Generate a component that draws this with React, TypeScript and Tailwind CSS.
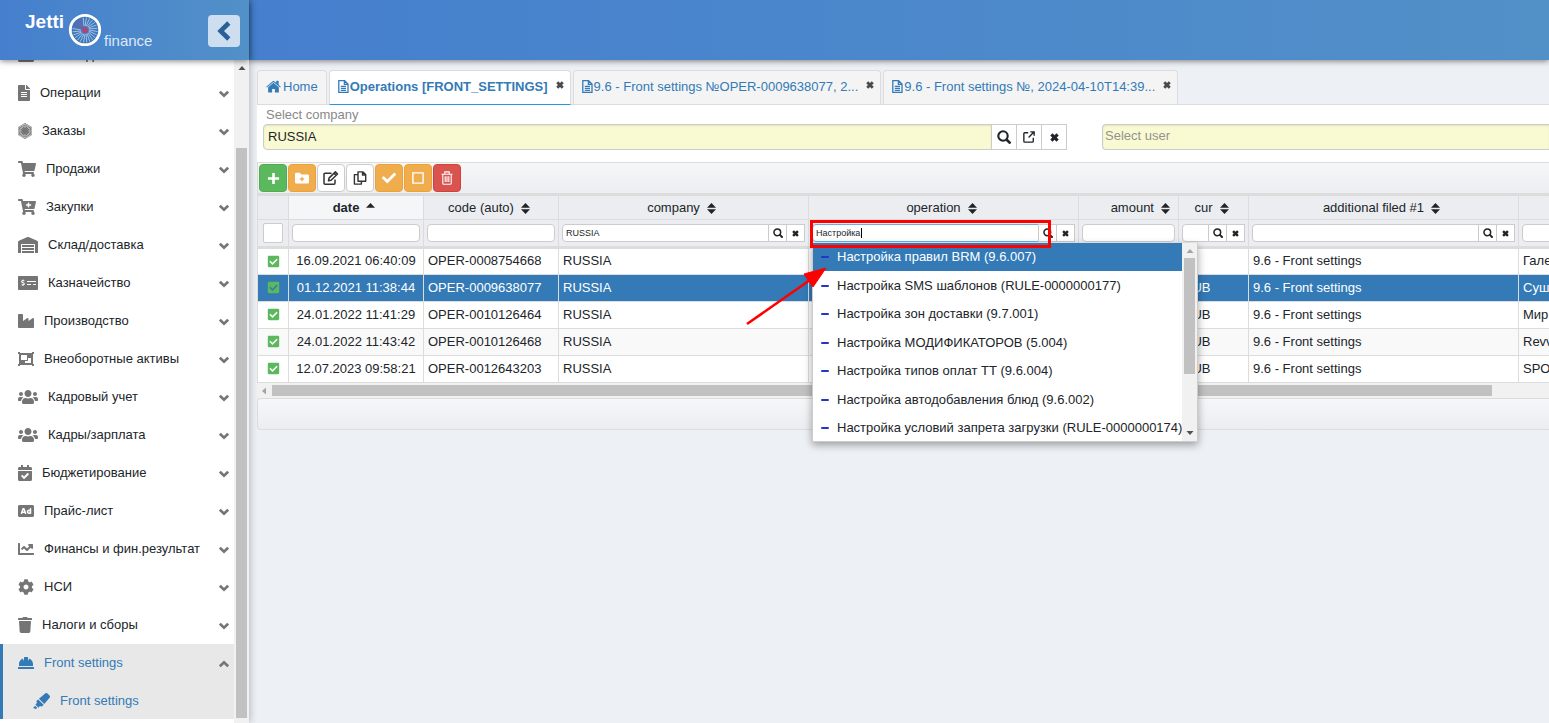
import React from "react";
import {
  FaTable, FaFileAlt, FaFirstOrder, FaShoppingCart, FaCartPlus, FaWarehouse, FaMoneyCheckAlt, FaIndustry,
  FaObjectGroup, FaUsers, FaCalendarCheck, FaAd, FaChartLine, FaCog, FaTrash, FaHardHat, FaHighlighter,
  FaCheck, FaCheckSquare,
} from "react-icons/fa";

type Glyph = React.ComponentType<{ className?: string }>;

/* ---------- small drawn icons ---------- */

const HomeIcon = () => (
  <svg viewBox="0 0 14 12" className="h-[13px] w-[15px]" fill="currentColor">
    <path d="M7 2.6 12 6.8v4.4a.5.5 0 0 1-.5.5H8.3V8.3H5.7v3.4H2.5a.5.5 0 0 1-.5-.5V6.8z" />
    <path d="M.2 6.2 6.3 1a1.1 1.1 0 0 1 1.4 0l1.8 1.5V1a.3.3 0 0 1 .3-.3h1.7a.3.3 0 0 1 .3.3v3.3l2 1.9-.6.7L7 1.7.8 6.9z" />
  </svg>
);

const DocIcon = () => (
  <svg viewBox="0 0 11 13" className="h-[13px] w-[11px] shrink-0" fill="none" stroke="currentColor" strokeWidth="1.3">
    <path d="M.8.7h5.8l3.4 3.4v8.2H.8z M6.4.7v3.6H10" />
    <path d="M2.8 6.3H8M2.8 8.3H8M2.8 10.3H8" />
  </svg>
);

const Cross = ({ className = "h-2 w-2" }: { className?: string }) => (
  <svg viewBox="0 0 10 10" className={className} fill="currentColor">
    <path d="M2.8.3.3 2.8 2.5 5 .3 7.2l2.5 2.5L5 7.5l2.2 2.2 2.5-2.5L7.5 5l2.2-2.2L7.2.3 5 2.5z" />
  </svg>
);

const Lens = ({ className = "h-2.5 w-2.5" }: { className?: string }) => (
  <svg viewBox="0 0 14 14" className={className} fill="none" stroke="currentColor" strokeWidth="2.1" strokeLinecap="round">
    <circle cx="6" cy="6" r="4.7" />
    <path d="m9.7 9.7 2.9 2.9" strokeWidth="2.7" />
  </svg>
);

const Chevron = ({ up }: { up?: boolean }) => (
  <svg viewBox="0 0 10 8" className="mt-0.5 mr-px h-2 w-2.5 shrink-0 text-[#757575]" fill="none" stroke="currentColor" strokeWidth="2.6">
    <path d={up ? "M.9 6.3 5 2.3l4.1 4" : "M.9 1.7 5 5.7l4.1-4"} />
  </svg>
);

const Collapse = () => (
  <svg viewBox="0 0 14 20" className="h-5 w-3.5" fill="none" stroke="currentColor" strokeWidth="4.6">
    <path d="M11.8 2 3.6 10l8.2 8" />
  </svg>
);

const OpenIcon = () => (
  <svg viewBox="0 0 14 14" className="h-3 w-3" fill="none" stroke="currentColor" strokeWidth="1.6">
    <path d="M6 2H2a1 1 0 0 0-1 1v9a1 1 0 0 0 1 1h9a1 1 0 0 0 1-1V8M8.5 1H13v4.5M13 1 6.5 7.5" />
  </svg>
);

const PlusIcon = () => (
  <svg viewBox="0 0 14 14" className="h-[13px] w-[13px]" stroke="currentColor" strokeWidth="2.8">
    <path d="M7 1v12M1 7h12" />
  </svg>
);

const FolderPlus = () => (
  <svg viewBox="0 0 14 12" className="h-3 w-3.5">
    <path d="M0 2Q0 .8 1.2.8h3.6L6.3 2.6h6.5Q14 2.6 14 3.8v6.4q0 1.2-1.2 1.2H1.2Q0 11.4 0 10.2z" fill="currentColor" />
    <path d="M7 4.8v4.4M4.8 7h4.4" stroke="#f0ad4e" strokeWidth="1.3" />
  </svg>
);

const EditIcon = () => (
  <svg viewBox="0 0 16 14" className="h-3.5 w-4" fill="none" stroke="currentColor" strokeWidth="1.5" strokeLinejoin="round">
    <path d="M8.5 2.2H2a1 1 0 0 0-1 1v9a1 1 0 0 0 1 1h9a1 1 0 0 0 1-1V8.5" />
    <path d="m5.5 9.8.5-2.7L12.4.9l2.1 2.1-6.4 6.3zM11 2.3l2 2" />
  </svg>
);

const CopyIcon = () => (
  <svg viewBox="0 0 14 14" className="h-3.5 w-3.5" fill="none" stroke="currentColor" strokeWidth="1.4" strokeLinejoin="round">
    <path d="M5 .9h5L12.7 3.6v6.6H5zM9.5.9V4h3.2M5 3.6H1.4v9.5h7v-2.9" />
  </svg>
);

const SquareIcon = () => (
  <svg viewBox="0 0 12 12" className="h-3 w-3" fill="none" stroke="currentColor" strokeWidth="1.4">
    <path d="M.9.9h10.2v10.2H.9z" />
  </svg>
);

const BinIcon = () => (
  <svg viewBox="0 0 12 14" className="h-3.5 w-3" fill="none" stroke="currentColor" strokeWidth="1.1">
    <path d="M.5 3.2h11M3.8 3V.9h4.4V3M1.8 3.2v9q0 1 1 1h6.4q1 0 1-1v-9M4.2 5.3v5.7M6 5.3v5.7M7.8 5.3v5.7" />
  </svg>
);

const SortIcon = () => (
  <svg viewBox="0 0 9 11" className="h-[11px] w-[9px]" fill="currentColor">
    <path d="M4.5 0 9 4.8H0zM4.5 11 0 6.2h9z" />
  </svg>
);

const SortUp = () => (
  <svg viewBox="0 0 9 11" className="h-[11px] w-[9px]" fill="currentColor">
    <path d="M4.5 0 9 4.8H0z" />
  </svg>
);

const Arrowhead = ({ dir, muted }: { dir: "up" | "down" | "left"; muted?: boolean }) => (
  <svg viewBox="0 0 8 8" className={muted ? "h-2 w-2 text-[#a3a3a3]" : "h-2 w-2 text-[#505050]"} fill="currentColor">
    <path d={dir === "up" ? "M4 2 7.5 6h-7z" : dir === "down" ? "M4 6 .5 2h7z" : "M2 4l4-3.5v7z"} />
  </svg>
);

const SPOKES = Array.from({ length: 24 }, (_, i) => (i * Math.PI) / 12);

const Logo = () => (
  <div className="flex h-10 text-white">
    <span className="mt-0.5 text-[19px] leading-5 font-bold">Jetti</span>
    <svg viewBox="0 0 34 34" className="mt-[3px] ml-1 h-[34px] w-[34px]" fill="none">
      <circle cx="17" cy="17" r="14.7" fill="#3f78ba" stroke="#fff" strokeWidth="2.8" />
      {SPOKES.map((a, i) => (
        <path
          key={i}
          d={`M${17 + 4 * Math.cos(a)} ${17 + 4 * Math.sin(a)}L${17 + 12.5 * Math.cos(a + 0.12)} ${17 + 12.5 * Math.sin(a + 0.12)}`}
          stroke={i > 12 && i < 17 ? "#7a5da3" : "#a9c8ea"}
          strokeWidth="0.9"
        />
      ))}
      <circle cx="17" cy="17" r="3.1" fill="#a8477f" />
    </svg>
    <span className="mt-[21px] ml-0.5 text-[15px] leading-5 text-[#dde9f7]">finance</span>
  </div>
);

/* ---------- sidebar ---------- */

const MENU: [Glyph, string, string][] = [
  [FaTable, "Мои задачи", "w-4"],
  [FaFileAlt, "Операции", "w-3"],
  [FaFirstOrder, "Заказы", "w-3.5"],
  [FaShoppingCart, "Продажи", "w-[18px]"],
  [FaCartPlus, "Закупки", "w-[18px]"],
  [FaWarehouse, "Склад/доставка", "w-5"],
  [FaMoneyCheckAlt, "Казначейство", "w-5"],
  [FaIndustry, "Производство", "w-4"],
  [FaObjectGroup, "Внеоборотные активы", "w-4"],
  [FaUsers, "Кадровый учет", "w-5"],
  [FaUsers, "Кадры/зарплата", "w-5"],
  [FaCalendarCheck, "Бюджетирование", "w-3.5"],
  [FaAd, "Прайс-лист", "w-4"],
  [FaChartLine, "Финансы и фин.результат", "w-4"],
  [FaCog, "НСИ", "w-4"],
  [FaTrash, "Налоги и сборы", "w-3.5"],
];

const Sidebar = () => (
  <aside className="relative z-20 flex w-[249px] shrink-0 flex-col bg-white shadow-[0_0_8px_rgba(0,0,0,0.3)]">
    <div className="z-10 flex h-[60px] shrink-0 items-center justify-between bg-linear-to-r from-[#457fce] to-[#5290c8] pr-[9px] pl-[25px] shadow-[0_1px_6px_rgba(0,0,0,0.5)]">
      <Logo />
      <button aria-label="Collapse menu" className="mt-0.5 flex h-8 w-8 items-center justify-center rounded bg-[#cddef1] text-[#2b6097]">
        <Collapse />
      </button>
    </div>
    <div className="flex min-h-0 flex-1">
      <nav className="min-w-0 flex-1 overflow-hidden">
        <ul className="-mt-6">
          {MENU.map(([Icon, label, size]) => (
            <li key={label}>
              <a href="#" className="flex h-[38px] items-center pr-1 pl-[18px] text-[#212529]">
                <Icon className={`${size} h-4 shrink-0 text-[#757575]`} />
                <span className="ml-2.5 flex-1 whitespace-nowrap">{label}</span>
                <Chevron />
              </a>
            </li>
          ))}
          <li className="border-l-[3px] border-[#337ab7] bg-[#e8e8e8] text-[#337ab7]">
            <a href="#" className="flex h-[38px] items-center pr-1 pl-[15px]">
              <FaHardHat className="h-4 w-4" />
              <span className="ml-2.5 flex-1">Front settings</span>
              <Chevron up />
            </a>
            <a href="#" className="flex h-[37px] items-center pl-[30px]">
              <FaHighlighter className="h-4 w-[17px]" />
              <span className="ml-2.5">Front settings</span>
            </a>
          </li>
        </ul>
      </nav>
      <div className="flex w-[15px] flex-col items-center bg-[#f1f1f1] pt-1">
        <Arrowhead dir="up" />
        <div className="mt-[76px] mb-[5px] w-[11px] flex-1 bg-[#c1c1c1]" />
      </div>
    </div>
  </aside>
);

/* ---------- tabs, filters, toolbar ---------- */

const TABS = [
  { label: "Operations [FRONT_SETTINGS]", active: true },
  { label: "9.6 - Front settings №OPER-0009638077, 2...", active: false },
  { label: "9.6 - Front settings №, 2024-04-10T14:39...", active: false },
];

const Tabs = () => (
  <div role="tablist" className="flex gap-0.5 text-[#337ab7]">
    <button role="tab" className="flex h-[34px] items-center gap-0.5 rounded-t border border-b-0 border-[#dcdcdc] bg-[#f4f4f4] px-2 pb-0.5">
      <HomeIcon />
      Home
    </button>
    {TABS.map((t) => (
      <div
        key={t.label}
        className={
          t.active
            ? "-mb-px flex h-[35px] items-center rounded-t border border-b-[#2196e3] border-[#dcdcdc] bg-white pr-1.5 pb-0.5 pl-2 font-bold"
            : "flex h-[34px] items-center rounded-t border border-b-0 border-[#dcdcdc] bg-[#f4f4f4] pr-1.5 pb-0.5 pl-2"
        }
      >
        <button role="tab" aria-selected={t.active} className="flex items-center gap-px whitespace-nowrap">
          <DocIcon />
          {t.label}
        </button>
        <button aria-label="Close tab" className="mb-1 ml-2 text-[#4a4a4a]">
          <Cross />
        </button>
      </div>
    ))}
  </div>
);

const SQ = "flex h-[26px] w-[26px] items-center justify-center border border-[#ccc] bg-white";

const Selectors = () => (
  <div className="flex items-end gap-[35px] overflow-hidden pt-0.5 pl-1.5">
    <div className="min-w-0 flex-1">
      <label htmlFor="company" className="block pb-px pl-[3px] leading-4 text-[#898989]">
        Select company
      </label>
      <div className="flex -space-x-px">
        <input
          id="company"
          defaultValue="RUSSIA"
          className="h-[26px] min-w-0 flex-1 rounded-l border border-[#ccc] bg-[#fafad2] px-1 pb-0.5 shadow-[inset_0_1px_2px_rgba(0,0,0,0.1)]"
        />
        <button aria-label="Search" className={SQ}><Lens className="h-3.5 w-3.5" /></button>
        <button aria-label="Open" className={SQ}><OpenIcon /></button>
        <button aria-label="Clear" className={SQ}><Cross className="h-[9px] w-[9px]" /></button>
      </div>
    </div>
    <input
      aria-label="Select user"
      placeholder="Select user"
      className="h-[26px] w-[447px] rounded-l border border-r-0 border-[#ccc] bg-[#fafad2] px-0.5 pb-1 shadow-[inset_0_1px_2px_rgba(0,0,0,0.1)] placeholder:text-[#939390]"
    />
  </div>
);

const TOOLS: [string, React.ReactNode, string][] = [
  ["Add", <PlusIcon />, "border-[#4cae4c] bg-[#5cb85c] text-white"],
  ["Add folder", <FolderPlus />, "border-[#eea236] bg-[#f0ad4e] text-white"],
  ["Edit", <EditIcon />, "border-[#ccc] bg-white text-[#333]"],
  ["Copy", <CopyIcon />, "border-[#ccc] bg-white text-[#333]"],
  ["Post", <FaCheck className="h-3.5 w-3.5" />, "border-[#eea236] bg-[#f0ad4e] text-white"],
  ["Unpost", <SquareIcon />, "border-[#eea236] bg-[#f0ad4e] text-white"],
  ["Delete", <BinIcon />, "border-[#d43f3a] bg-[#d9534f] text-white"],
];

const Toolbar = () => (
  <div className="mt-3 flex h-8 items-center gap-px border border-r-0 border-b-0 border-[#dcdcdc] bg-linear-to-b from-[#f6f7f9] to-[#ebedf0] pb-px pl-px">
    {TOOLS.map(([name, icon, tone]) => (
      <button key={name} aria-label={name} className={`${tone} flex h-7 w-7 items-center justify-center rounded border`}>
        {icon}
      </button>
    ))}
  </div>
);

/* ---------- table ---------- */

const OPTIONS = [
  "Настройка правил BRM (9.6.007)",
  "Настройка SMS шаблонов (RULE-0000000177)",
  "Настройка зон доставки (9.7.001)",
  "Настройка МОДИФИКАТОРОВ (5.004)",
  "Настройка типов оплат ТТ (9.6.004)",
  "Настройка автодобавления блюд (9.6.002)",
  "Настройка условий запрета загрузки (RULE-0000000174)",
];

const Suggestions = () => (
  <div className="absolute top-full left-0 z-30 mt-px flex h-[199px] w-[386px] border border-t-0 border-[#ccc] bg-white text-left text-[13px] font-normal shadow-[0_3px_8px_rgba(0,0,0,0.35)]">
    <ul role="listbox" className="min-w-0 flex-1">
      {OPTIONS.map((o, i) => (
        <li
          key={o}
          role="option"
          aria-selected={i === 0}
          className={`${i === 0 ? "bg-[#337ab7] text-white" : "text-[#212529]"} flex h-7 items-center gap-2 pl-2 leading-4 whitespace-nowrap even:h-[29px]`}
        >
          <span className="h-0.5 w-2 shrink-0 rounded-full bg-[#2536c4]" />
          {o}
        </li>
      ))}
    </ul>
    <div className="flex w-[15px] shrink-0 flex-col items-center bg-[#f1f1f1] py-1">
      <Arrowhead dir="up" muted />
      <div className="mt-[3px] h-[116px] w-[11px] bg-[#c1c1c1]" />
      <div className="mt-auto"><Arrowhead dir="down" /></div>
    </div>
  </div>
);

const Callout = () => (
  <>
    <div className="pointer-events-none absolute -top-1 -left-0.5 z-40 h-7 w-[241px] border-[3px] border-[#f00]" />
    <svg viewBox="0 0 84 60" className="pointer-events-none absolute top-[42px] -left-[66px] z-40 h-[60px] w-[84px]">
      <path d="M1 58 64 14" stroke="#f00" strokeWidth="2.6" />
      <path d="M80 2 58 8 67 21z" fill="#f00" stroke="#f00" />
    </svg>
  </>
);

const FSQ = "flex h-[18px] w-[19px] shrink-0 items-center justify-center border border-[#ccc] bg-white text-[#222]";

const Filter = ({ name, value, lookup, focus }: { name: string; value?: string; lookup?: boolean; focus?: boolean }) => (
  <div className="flex -space-x-px">
    <input
      aria-label={`Filter ${name}`}
      defaultValue={value}
      className={`${lookup ? "rounded-l" : "rounded"} ${focus ? "border-[#66afe9]" : "border-[#ccc]"} h-[18px] w-full min-w-0 border bg-white px-[3px] text-[9px] font-normal text-[#212529]`}
    />
    {lookup && <button aria-label={`Find ${name}`} className={FSQ}><Lens /></button>}
    {lookup && <button aria-label={`Clear ${name}`} className={FSQ}><Cross className="h-[7px] w-[7px]" /></button>}
  </div>
);

const COLS = [
  { name: "date", width: "w-[135px]", lookup: false },
  { name: "code (auto)", width: "w-[135px]", lookup: false },
  { name: "company", width: "w-[250px]", lookup: true, value: "RUSSIA" },
  { name: "operation", width: "w-[270px]", lookup: true, value: "Настройка" },
  { name: "amount", width: "w-[100px]", lookup: false },
  { name: "cur", width: "w-[70px]", lookup: true },
  { name: "additional filed #1", width: "w-[270px]", lookup: true },
];

const ROWS = [
  ["16.09.2021 06:40:09", "OPER-0008754668", "", "Галерея"],
  ["01.12.2021 11:38:44", "OPER-0009638077", "RUB", "Суши"],
  ["24.01.2022 11:41:29", "OPER-0010126464", "RUB", "Мир суши"],
  ["24.01.2022 11:43:42", "OPER-0010126468", "RUB", "Revvy"],
  ["12.07.2023 09:58:21", "OPER-0012643203", "RUB", "SPORT"],
];

const TD = "border border-[#dcdcdc] px-1 pt-0 pb-px";

const Grid = () => (
  <table className="w-[1460px] table-fixed border-collapse whitespace-nowrap">
    <thead className="bg-[#ebedf0]">
      <tr className="h-[25px]">
        <th className="w-[31px] border border-t-[3px] border-[#dcdcdc] p-0" />
        {COLS.map((c, i) => (
          <th
            key={c.name}
            className={`${c.width} ${i === 0 ? "bg-[#f5f6f8] font-bold" : "font-normal"} border border-t-[3px] border-[#dcdcdc] p-0`}
          >
            <span className={`flex items-center gap-[7px] pt-px ${c.name === "amount" ? "justify-end pr-2" : "justify-center pr-1"}`}>
              {c.name}
              {i === 0 ? <SortUp /> : <SortIcon />}
            </span>
          </th>
        ))}
        <th className="border border-t-[3px] border-[#dcdcdc] p-0" />
      </tr>
      <tr className="h-7">
        <th className="border border-b-[3px] border-[#dcdcdc] px-[5px] py-0">
          <input type="checkbox" aria-label="Select all" className="block h-5 w-5 appearance-none rounded-xs border border-[#ccc] bg-white" />
        </th>
        {COLS.map((c) => (
          <th key={c.name} className="border border-b-[3px] border-[#dcdcdc] px-[3px] py-0">
            <div className="relative">
              <Filter name={c.name} value={c.value} lookup={c.lookup} focus={c.name === "operation"} />
              {c.name === "operation" && (
                <>
                  <span className="absolute top-1 left-[49px] h-2.5 w-px bg-black" />
                  <Suggestions />
                  <Callout />
                </>
              )}
            </div>
          </th>
        ))}
        <th className="border border-b-[3px] border-[#dcdcdc] px-[3px] py-0">
          <Filter name="additional filed #2" />
        </th>
      </tr>
    </thead>
    <tbody>
      {ROWS.map(([date, code, cur, extra], i) => (
        <tr
          key={code}
          className={
            i === 1 ? "h-[27px] bg-[#337ab7] text-white" : i === 3 ? "h-[27px] bg-[#f9f9f9]" : "h-[27px] bg-white"
          }
        >
          <td className={TD}>
            <FaCheckSquare className="mx-auto h-[13px] w-[13px] text-[#5cb85c]" />
          </td>
          <td className={`${TD} text-center`}>{date}</td>
          <td className={TD}>{code}</td>
          <td className={TD}>RUSSIA</td>
          <td className={TD} />
          <td className={TD} />
          <td className={TD}>{cur}</td>
          <td className={TD}>9.6 - Front settings</td>
          <td className={TD}>{extra}</td>
        </tr>
      ))}
    </tbody>
  </table>
);

export default function App() {
  return (
    <div className="flex h-screen overflow-hidden bg-[#edf0f5] font-['Liberation_Sans',Arial,sans-serif] text-[13px] text-[#212529]">
      <Sidebar />
      <div className="flex min-w-0 flex-1 flex-col">
        <header className="h-[60px] shrink-0 bg-linear-to-r from-[#457fce] to-[#5290c8] shadow-[0_1px_6px_rgba(0,0,0,0.5)]" />
        <main className="min-w-0 pt-2.5 pl-2">
          <Tabs />
          <div className="border-t border-[#dcdcdc] bg-white">
            <Selectors />
            <Toolbar />
            <div className="-mt-px overflow-x-clip">
              <Grid />
            </div>
            <div className="flex h-[15px] items-center bg-[#f1f1f1] pr-[57px] pl-[3px]">
              <Arrowhead dir="left" muted />
              <div className="ml-1 h-[11px] flex-1 bg-[#c1c1c1]" />
            </div>
          </div>
          <div className="h-8 rounded-l border border-r-0 border-[#dcdcdc] bg-linear-to-b from-[#f6f7f9] to-[#ebedf0]" />
        </main>
      </div>
    </div>
  );
}
